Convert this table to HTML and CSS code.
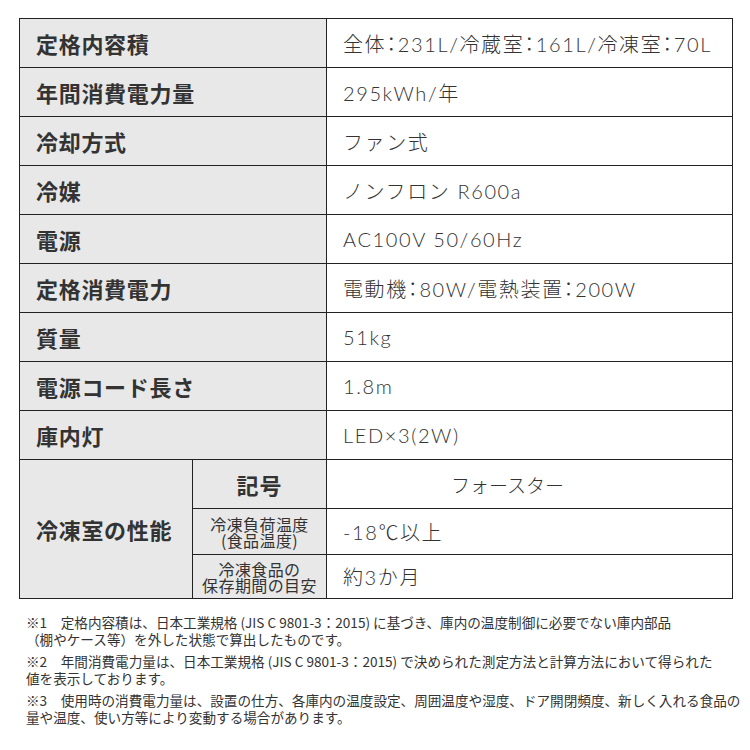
FILE: index.html
```html
<!DOCTYPE html>
<html lang="ja">
<head>
<meta charset="utf-8">
<link rel="stylesheet" href="styles.css">
</head>
<body>
<div class="page">
<table class="spec">
  <colgroup><col class="c1"><col class="c2"><col class="c3"></colgroup>
  <tr><th colspan="2">定格内容積</th><td>全体：231L/冷蔵室：161L/冷凍室：70L</td></tr>
  <tr><th colspan="2">年間消費電力量</th><td>295kWh/年</td></tr>
  <tr><th colspan="2">冷却方式</th><td>ファン式</td></tr>
  <tr><th colspan="2">冷媒</th><td>ノンフロン R600a</td></tr>
  <tr><th colspan="2">電源</th><td>AC100V 50/60Hz</td></tr>
  <tr><th colspan="2">定格消費電力</th><td>電動機：80W/電熱装置：200W</td></tr>
  <tr><th colspan="2">質量</th><td>51kg</td></tr>
  <tr><th colspan="2">電源コード長さ</th><td>1.8m</td></tr>
  <tr><th colspan="2">庫内灯</th><td>LED×3(2W)</td></tr>
  <tr class="r1"><th rowspan="3">冷凍室の性能</th><th class="sub big">記号</th><td class="star">フォースター</td></tr>
  <tr class="r2"><th class="sub">冷凍負荷温度<br>(食品温度)</th><td>-18℃以上</td></tr>
  <tr class="r3"><th class="sub">冷凍食品の<br>保存期間の目安</th><td>約3か月</td></tr>
</table>
<div class="notes">
  <p>※1　定格内容積は、日本工業規格 (JIS C 9801-3：2015) に基づき、庫内の温度制御に必要でない庫内部品<br>（棚やケース等）を外した状態で算出したものです。</p>
  <p>※2　年間消費電力量は、日本工業規格 (JIS C 9801-3：2015) で決められた測定方法と計算方法において得られた<br>値を表示しております。</p>
  <p>※3　使用時の消費電力量は、設置の仕方、各庫内の温度設定、周囲温度や湿度、ドア開閉頻度、新しく入れる食品の<br>量や温度、使い方等により変動する場合があります。</p>
</div>
</div>
</body>
</html>
```
FILE: styles.css
```css
html, body { margin: 0; padding: 0; background: #fff; }
body { font-family: "Noto Sans CJK JP", "Noto Sans", sans-serif; color: #333; }
.page { padding: 18px 0 0 19px; }
.spec { border-collapse: collapse; table-layout: fixed; width: 713px; }
.c1 { width: 173px; } .c2 { width: 134px; } .c3 { width: 406px; }
.spec th, .spec td { border: 1.5px solid #222; height: 48px; padding: 0 0 0 16px; vertical-align: middle; }
.spec th { background: #e8e8e8; text-align: left; font-size: 22px; font-weight: 700; letter-spacing: 0.7px; color: #333; }
.spec td { font-family: "Lato", "Noto Sans CJK JP", sans-serif; font-size: 20px; font-weight: 300; letter-spacing: 1.6px; color: #333; font-feature-settings: "halt"; }
.spec th.sub { text-align: center; padding: 0; font-size: 16px; font-weight: 400; line-height: 16px; letter-spacing: 0.4px; }
.spec th.big { font-size: 22px; font-weight: 700; letter-spacing: 1px; }
.spec td.star { padding-left: 124px; letter-spacing: 0; font-size: 19px; }
.spec .r1 th, .spec .r1 td { height: 48px; }
.spec .r2 th, .spec .r2 td { height: 45px; }
.spec .r3 th, .spec .r3 td { height: 43px; }
.notes { padding: 15px 0 0 7px; font-size: 13.6px; line-height: 17px; color: #333; }
.notes p { margin: 0 0 5px 0; }
```
